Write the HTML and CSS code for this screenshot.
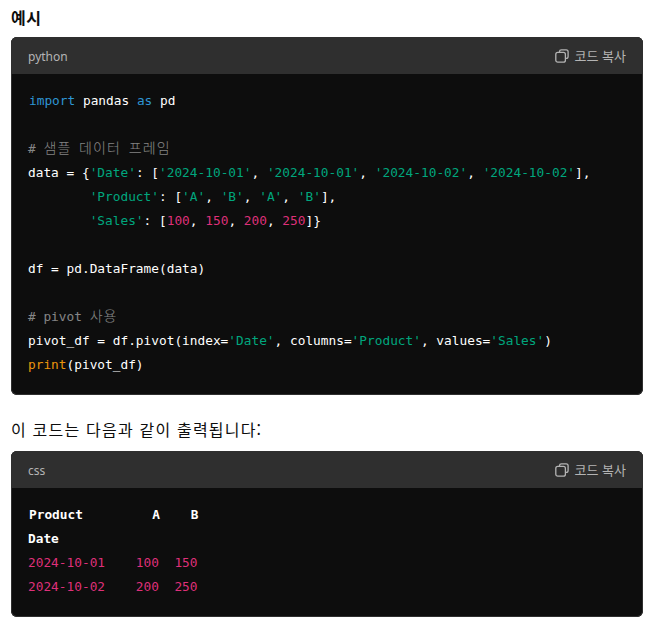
FILE: index.html
```html
<!DOCTYPE html>
<html lang="ko">
<head>
<meta charset="utf-8">
<title>예시</title>
<link rel="stylesheet" href="styles.css">
</head>
<body>
<h3 class="heading">예시</h3>
<section class="card">
  <header class="card-head">
    <span class="lang">python</span>
    <span class="copy">
      <svg class="copy-icon" width="14" height="14" viewBox="0 0 14 14" fill="none" stroke="currentColor" stroke-width="1.3"><path d="M4.5 3V2.6A1.9 1.9 0 0 1 6.4 .8h4.8a1.9 1.9 0 0 1 1.9 1.9v4.8a1.9 1.9 0 0 1-1.9 1.9h-.6"/><rect x=".8" y="3.4" width="9.6" height="9.8" rx="2"/></svg>
      코드 복사
    </span>
  </header>
<pre class="code"><code><span class="kw">import</span> pandas <span class="kw">as</span> pd

<span class="cm"># <span class="ko">샘플</span> <span class="ko">데이터</span> <span class="ko">프레임</span></span>
data = {<span class="str">'Date'</span>: [<span class="str">'2024-10-01'</span>, <span class="str">'2024-10-01'</span>, <span class="str">'2024-10-02'</span>, <span class="str">'2024-10-02'</span>],
        <span class="str">'Product'</span>: [<span class="str">'A'</span>, <span class="str">'B'</span>, <span class="str">'A'</span>, <span class="str">'B'</span>],
        <span class="str">'Sales'</span>: [<span class="num">100</span>, <span class="num">150</span>, <span class="num">200</span>, <span class="num">250</span>]}

df = pd.DataFrame(data)

<span class="cm"># pivot <span class="ko">사용</span></span>
pivot_df = df.pivot(index=<span class="str">'Date'</span>, columns=<span class="str">'Product'</span>, values=<span class="str">'Sales'</span>)
<span class="fn">print</span>(pivot_df)</code></pre>
</section>
<p class="para">이 코드는 다음과 같이 출력됩니다:</p>
<section class="card">
  <header class="card-head">
    <span class="lang">css</span>
    <span class="copy">
      <svg class="copy-icon" width="14" height="14" viewBox="0 0 14 14" fill="none" stroke="currentColor" stroke-width="1.3"><path d="M4.5 3V2.6A1.9 1.9 0 0 1 6.4 .8h4.8a1.9 1.9 0 0 1 1.9 1.9v4.8a1.9 1.9 0 0 1-1.9 1.9h-.6"/><rect x=".8" y="3.4" width="9.6" height="9.8" rx="2"/></svg>
      코드 복사
    </span>
  </header>
<pre class="code"><code><span class="bold">Product         A    B</span>
<span class="bold">Date</span>
<span class="num">2024-10-01    100  150</span>
<span class="num">2024-10-02    200  250</span></code></pre>
</section>
</body>
</html>
```

FILE: styles.css
```css
html, body {
  margin: 0;
  padding: 0;
  background: #fff;
}
body {
  padding: 5px 14px 0 11px;
  font-family: "Noto Sans", "Noto Sans CJK KR", sans-serif;
  color: #0d0d0d;
}
.heading {
  margin: 0 0 8px;
  font-family: "Noto Sans CJK KR", sans-serif;
  font-size: 16px;
  line-height: 24px;
  font-weight: 700;
  letter-spacing: 0.5px;
}
.card {
  background: #0d0d0d;
  border-radius: 6px;
  overflow: hidden;
  box-shadow: inset 0 0 0 1px #2f2f2f;
}
.card-head {
  height: 37px;
  box-sizing: border-box;
  padding: 0 17px;
  display: flex;
  align-items: center;
  justify-content: space-between;
  background: #2f2f2f;
  color: #b4b4b4;
  font-size: 12px;
}
.lang {
  padding-top: 2px;
}
.copy {
  display: flex;
  align-items: center;
  gap: 6px;
  font-family: "Noto Sans CJK KR", sans-serif;
  font-size: 13px;
}
.copy-icon {
  flex: none;
}
.code {
  margin: 0;
  padding: 15px 17px 18px;
  color: #fff;
  font-family: "DejaVu Sans Mono", monospace;
  font-size: 12.8px;
  line-height: 24px;
  overflow: hidden;
}
.code code {
  font: inherit;
}
.code code::before {
  content: "";
  display: inline-block;
  width: 1px;
}
.kw { color: #2e95d3; }
.str { color: #00a67d; }
.num { color: #df3079; }
.fn { color: #e9950c; }
.cm { color: rgba(255, 255, 255, 0.5); }
.ko {
  font-family: "Noto Sans CJK KR", sans-serif;
  font-size: 14px;
  font-weight: 300;
  line-height: 0;
  letter-spacing: 1.1px;
}
.bold { font-weight: 700; }
.para {
  margin: 0;
  padding: 22px 0 10px;
  font-family: "Noto Sans CJK KR", sans-serif;
  font-size: 16px;
  line-height: 24px;
  letter-spacing: 1.2px;
}
```
